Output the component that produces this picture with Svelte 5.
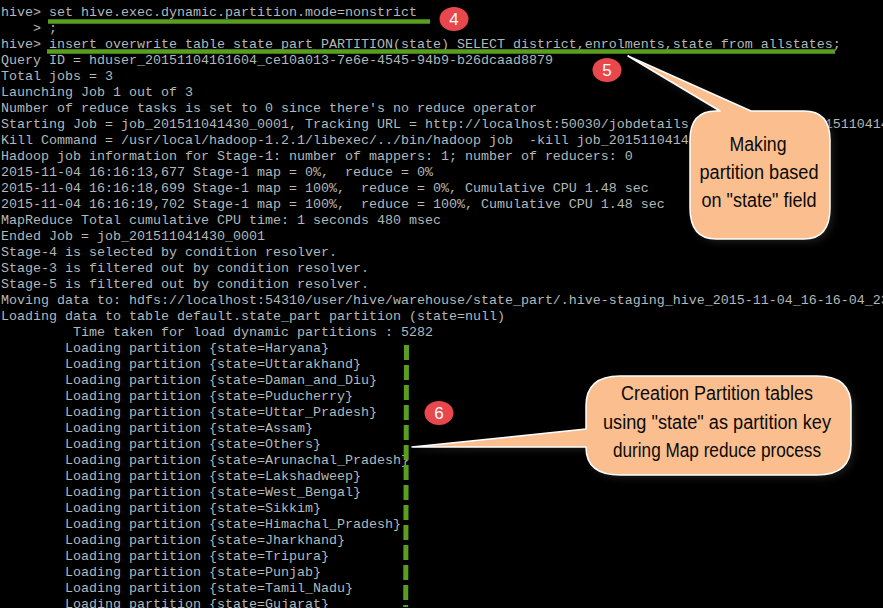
<script lang="ts">
	const log = [
		'hive> set hive.exec.dynamic.partition.mode=nonstrict',
		'    > ;',
		'hive> insert overwrite table state_part PARTITION(state) SELECT district,enrolments,state from allstates;',
		'Query ID = hduser_20151104161604_ce10a013-7e6e-4545-94b9-b26dcaad8879',
		'Total jobs = 3',
		'Launching Job 1 out of 3',
		"Number of reduce tasks is set to 0 since there's no reduce operator",
		'Starting Job = job_201511041430_0001, Tracking URL = http://localhost:50030/jobdetails.jsp?jobid=job_201511041430_0001',
		'Kill Command = /usr/local/hadoop-1.2.1/libexec/../bin/hadoop job  -kill job_201511041430_0001',
		'Hadoop job information for Stage-1: number of mappers: 1; number of reducers: 0',
		'2015-11-04 16:16:13,677 Stage-1 map = 0%,  reduce = 0%',
		'2015-11-04 16:16:18,699 Stage-1 map = 100%,  reduce = 0%, Cumulative CPU 1.48 sec',
		'2015-11-04 16:16:19,702 Stage-1 map = 100%,  reduce = 100%, Cumulative CPU 1.48 sec',
		'MapReduce Total cumulative CPU time: 1 seconds 480 msec',
		'Ended Job = job_201511041430_0001',
		'Stage-4 is selected by condition resolver.',
		'Stage-3 is filtered out by condition resolver.',
		'Stage-5 is filtered out by condition resolver.',
		'Moving data to: hdfs://localhost:54310/user/hive/warehouse/state_part/.hive-staging_hive_2015-11-04_16-16-04_238-1/-ext-10000',
		'Loading data to table default.state_part partition (state=null)',
		'         Time taken for load dynamic partitions : 5282'
	];

	const states = [
		'Haryana', 'Uttarakhand', 'Daman_and_Diu', 'Puducherry', 'Uttar_Pradesh', 'Assam',
		'Others', 'Arunachal_Pradesh', 'Lakshadweep', 'West_Bengal', 'Sikkim',
		'Himachal_Pradesh', 'Jharkhand', 'Tripura', 'Punjab', 'Tamil_Nadu', 'Gujarat'
	];

	const badges = [
		{ n: 4, x: 454, y: 19 },
		{ n: 5, x: 607, y: 70 },
		{ n: 6, x: 439, y: 413 }
	];
</script>

<main class="terminal">
	<pre class="log">{#each log as line}<div>{line}</div>{/each}{#each states as state}<div>{`        Loading partition {state=${state}}`}</div>{/each}</pre>

	<svg class="notes" viewBox="0 0 883 608" aria-hidden="true">
		<path class="mark" d="M48 21.5H430" />
		<path class="mark" d="M47 51.5H835" />
		<path class="mark dashed" d="M406.5 345L405.7 607" />

		{#each badges as b}
			<ellipse class="badge" cx={b.x} cy={b.y} rx="14.5" ry="12" />
			<text class="badge-num" x={b.x} y={b.y + 6}>{b.n}</text>
		{/each}

		<path
			class="bubble"
			d="M628 56L720 111H716Q690 111 690 140V208Q690 239 716 239H804Q830 239 830 208V140Q830 111 804 111H751Z"
		/>
		<text class="hand" x="758" y="151" textLength="57" lengthAdjust="spacingAndGlyphs">Making</text>
		<text class="hand" x="759" y="179" textLength="119" lengthAdjust="spacingAndGlyphs">partition based</text>
		<text class="hand" x="759" y="207" textLength="115" lengthAdjust="spacingAndGlyphs">on "state" field</text>

		<path
			class="bubble"
			d="M412 447L586 429V406Q586 376 620 376H817Q851 376 851 406V445Q851 475 817 475H620Q586 475 586 447Z"
		/>
		<text class="hand" x="717" y="400" textLength="192" lengthAdjust="spacingAndGlyphs">Creation Partition tables</text>
		<text class="hand" x="717" y="429" textLength="228" lengthAdjust="spacingAndGlyphs">using "state" as partition key</text>
		<text class="hand" x="717" y="457" textLength="208" lengthAdjust="spacingAndGlyphs">during Map reduce process</text>
	</svg>
</main>

<style>
	:global(body) {
		background: #000;
	}

	.terminal {
		position: relative;
		width: 883px;
		height: 608px;
		overflow: hidden;
		background: #000;
	}

	.log {
		margin: 0;
		padding: 5px 0 0 1px;
		font-family: 'Liberation Mono', monospace;
		font-size: 13.33px;
		line-height: 16px;
		color: #b4b8b8;
		white-space: pre;
	}

	.notes {
		position: absolute;
		inset: 0;
		width: 883px;
		height: 608px;
	}

	.mark {
		fill: none;
		stroke: #5a9e20;
		stroke-width: 4.5;
	}

	.dashed {
		stroke-width: 5;
		stroke-dasharray: 15 5;
	}

	.badge {
		fill: #e8474c;
	}

	.badge-num {
		fill: #fff;
		font-family: 'Liberation Sans', sans-serif;
		font-size: 17px;
		text-anchor: middle;
	}

	.bubble {
		fill: #fbbf8f;
		stroke: #fff;
		stroke-width: 1.5;
		stroke-linejoin: round;
		filter: drop-shadow(3px 3px 3px rgba(40, 40, 40, 0.6));
	}

	.hand {
		fill: #0a0a0a;
		font-family: 'Liberation Sans', sans-serif;
		font-size: 20px;
		text-anchor: middle;
	}
</style>
